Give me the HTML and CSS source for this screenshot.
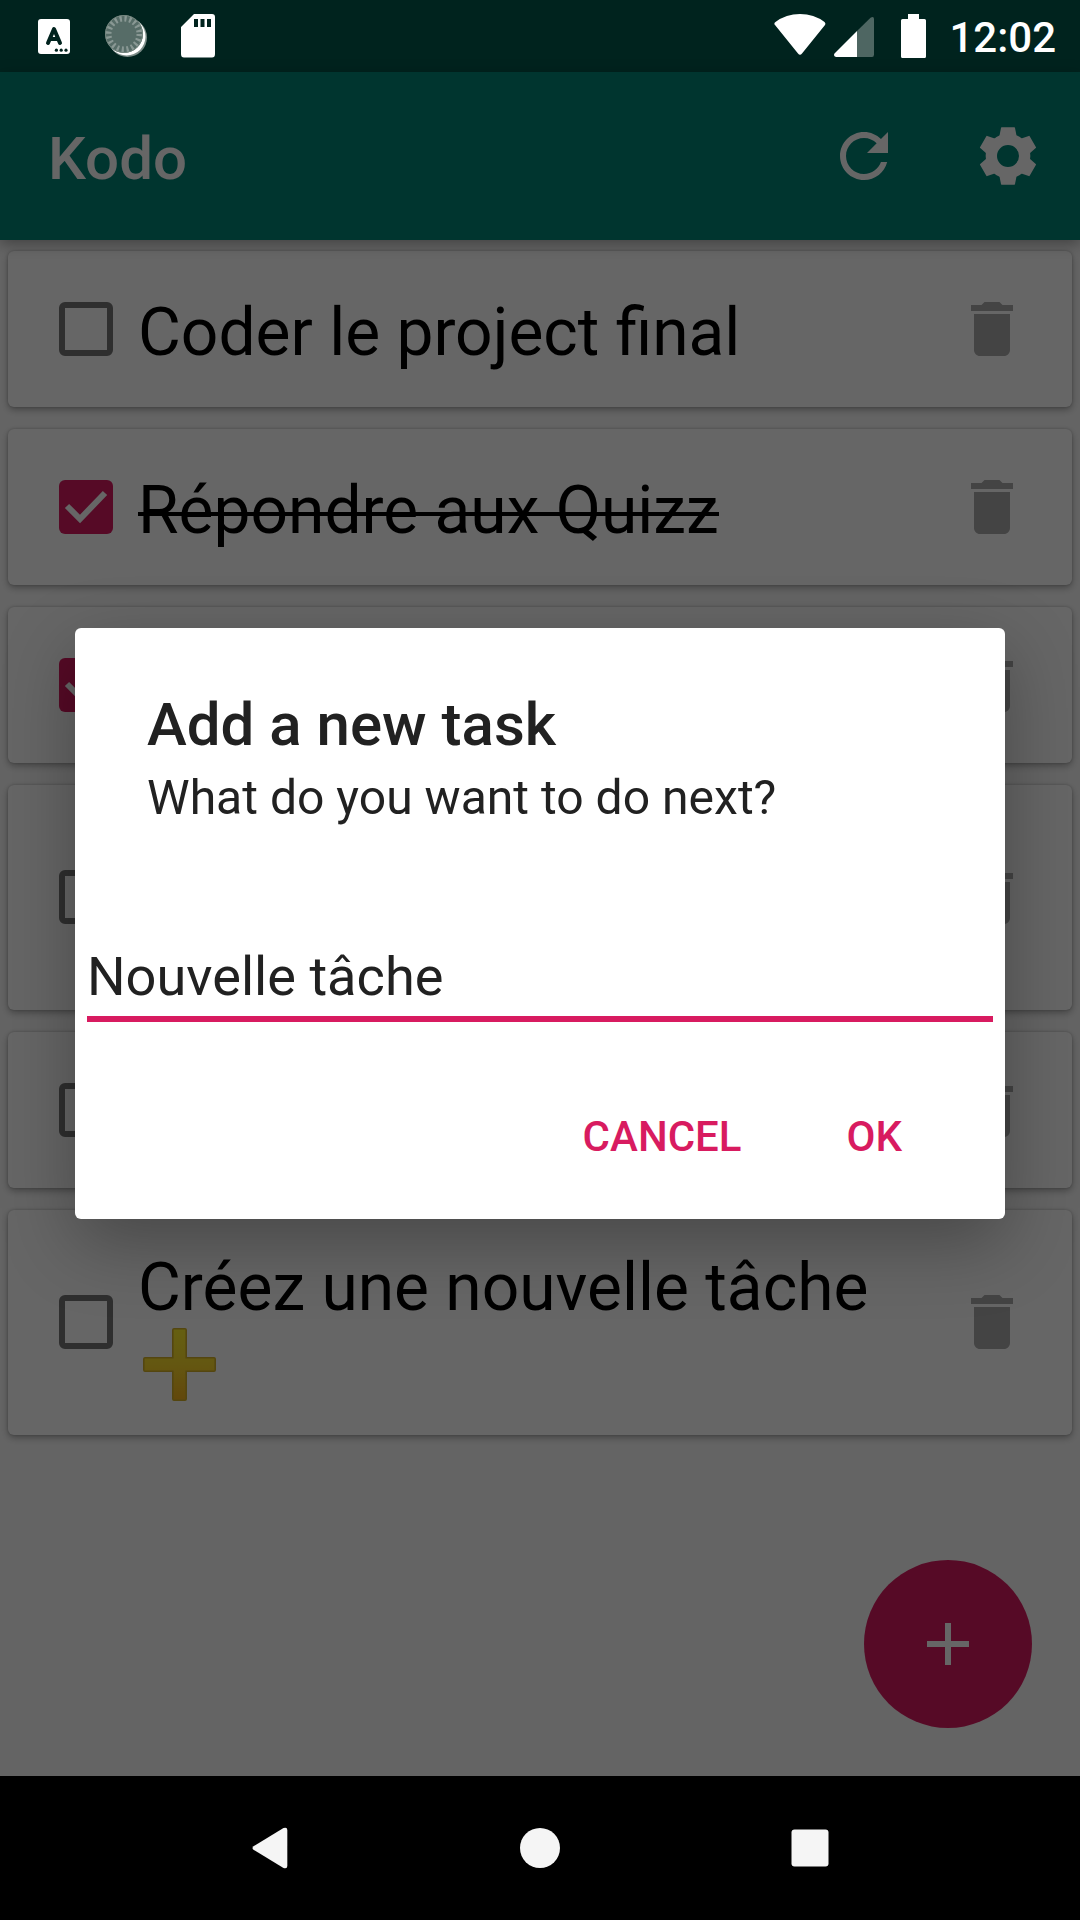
FILE: index.html
```
<!DOCTYPE html>
<html lang="fr">
<head>
<meta charset="utf-8">
<title>Kodo</title>
<link rel="stylesheet" href="styles.css">
</head>
<body>
<svg class="defs" aria-hidden="true">
  <symbol id="trash" viewBox="0 0 24 24"><path d="M6 19c0 1.1.9 2 2 2h8c1.1 0 2-.9 2-2V7H6v12zM19 4h-3.5l-1-1h-5l-1 1H5v2h14V4z"/></symbol>
  <symbol id="check" viewBox="0 0 54 54"><path d="M8 26 L21 39 L46 13" fill="none" stroke="#fff" stroke-width="6"/></symbol>
</svg>
<div class="phone">
  <header class="status">
    <div class="status-left">
      <svg width="32" height="35" viewBox="0 0 32 35"><rect width="32" height="35" rx="3" fill="#fff"/><path d="M10 24 L16 10 L22 24 M12 20 H20" fill="none" stroke="#00231e" stroke-width="4" stroke-linecap="round" stroke-linejoin="round"/><g fill="#00231e"><circle cx="18.4" cy="31.2" r="1.6"/><circle cx="23.2" cy="31.2" r="1.6"/><circle cx="28" cy="31.2" r="1.6"/></g></svg>
      <svg class="sync" width="44" height="44" viewBox="0 0 44 44"><circle cx="23.500" cy="23.500" r="19.500" fill="#7c8c88"/><circle cx="22.500" cy="22.500" r="19" fill="#fff"/><circle cx="20" cy="20" r="19" fill="#566c67"/><circle cx="20" cy="20" r="15.500" fill="none" stroke="#899894" stroke-width="6" stroke-dasharray="2.200 2.670"/><circle cx="20" cy="20" r="18.500" fill="none" stroke="#74867f" stroke-width="1"/></svg>
      <svg width="34" height="44" viewBox="0 0 34 44"><path fill="#fff" fill-rule="evenodd" d="M13 0H31Q34 0 34 3V40Q34 43.500 31 43.500H3Q0 43.500 0 40V13ZM13 5V13H17V5ZM19.500 5V13H23.500V5ZM26 5V13H30V5Z"/></svg>
    </div>
    <div class="status-right">
      <svg width="52" height="42" viewBox="0 0 52 42"><path fill="#fff" d="M1 11Q-.5 9.500 1.500 8Q12 0 26 0Q40 0 50.500 8Q52 9.500 51 11L28 39.500Q26 42 24 39.500Z"/></svg>
      <svg class="signal" width="40" height="40" viewBox="0 0 40 40"><path fill="#4e6662" d="M23 14 36.500.7Q40-1 40 2V37.500Q40 40 38 40H23Z"/><path fill="#fff" d="M23 14V40H2Q-1 39 .5 36.500Z"/></svg>
      <svg class="battery" width="25" height="44" viewBox="0 0 25 44"><path fill="#fff" d="M7 0H18V5H23.500Q25 5 25 6.500V42.500Q25 44 23.500 44H1.500Q0 44 0 42.500V6.500Q0 5 1.500 5H7Z"/></svg>
      <span class="clock">12:02</span>
    </div>
  </header>

  <div class="app">
    <div class="appbar">
      <h1 class="app-title">Kodo</h1>
      <div class="actions">
        <svg class="action" viewBox="0 0 24 24"><path d="M17.650 6.350C16.200 4.900 14.210 4 12 4c-4.420 0-7.990 3.580-7.990 8s3.570 8 7.990 8c3.730 0 6.840-2.550 7.730-6h-2.080c-.82 2.330-3.040 4-5.650 4-3.310 0-6-2.690-6-6s2.690-6 6-6c1.660 0 3.140.69 4.220 1.780L13 11h7V4l-2.350 2.350z"/></svg>
        <svg class="action" viewBox="-108 -108 216 216">
          <defs><path id="tooth" d="M-27-54 L-21-84Q-21-86-19-86H19Q21-86 21-84L27-54Z"/></defs>
          <circle r="50" fill="none" stroke="#fff" stroke-width="34"/>
          <use href="#tooth"/><use href="#tooth" transform="rotate(60)"/><use href="#tooth" transform="rotate(120)"/><use href="#tooth" transform="rotate(180)"/><use href="#tooth" transform="rotate(240)"/><use href="#tooth" transform="rotate(300)"/>
        </svg>
      </div>
    </div>

    <main class="list">
      <article class="card"><span class="box"></span><p class="task">Coder le project final</p><svg class="trash"><use href="#trash"/></svg></article>
      <article class="card"><span class="box checked"><svg><use href="#check"/></svg></span><p class="task"><s class="done">Répondre aux Quizz</s></p><svg class="trash"><use href="#trash"/></svg></article>
      <article class="card"><span class="box checked"><svg><use href="#check"/></svg></span><p class="task"></p><svg class="trash"><use href="#trash"/></svg></article>
      <article class="card tall"><span class="box"></span><p class="task"></p><svg class="trash"><use href="#trash"/></svg></article>
      <article class="card"><span class="box"></span><p class="task"></p><svg class="trash"><use href="#trash"/></svg></article>
      <article class="card tall"><span class="box"></span><p class="task">Créez une nouvelle tâche
        <svg class="plus" viewBox="0 0 73 73"><defs><linearGradient id="gold" x1="0" y1="0" x2="0" y2="1"><stop offset="0" stop-color="#fdee2c"/><stop offset=".5" stop-color="#fad92b"/><stop offset="1" stop-color="#f5b21d"/></linearGradient></defs><path d="M31 .8H42Q43.200.8 43.200 2V29.800H71Q72.200 29.800 72.200 31V42Q72.200 43.200 71 43.200H43.200V71Q43.200 72.200 42 72.200H31Q29.800 72.200 29.800 71V43.200H2Q.8 43.200.8 42V31Q.8 29.800 2 29.800H29.800V2Q29.800.8 31 .8Z" fill="url(#gold)" stroke="#d2b028" stroke-width="1.600"/></svg></p><svg class="trash"><use href="#trash"/></svg></article>
    </main>

    <div class="fab"><svg width="42" height="42" viewBox="0 0 42 42"><path fill="#fff" d="M18 0H24V18H42V24H24V42H18V24H0V18H18Z"/></svg></div>

    <div class="scrim">
      <section class="dialog">
        <h2 class="dialog-title">Add a new task</h2>
        <p class="dialog-message">What do you want to do next?</p>
        <div class="field">Nouvelle tâche</div>
        <div class="buttons"><span>CANCEL</span><span>OK</span></div>
      </section>
    </div>
  </div>

  <nav class="nav">
    <svg width="36" height="42" viewBox="0 0 36 42"><path fill="#f5f5f5" d="M1.500 19.200 31.500 1Q35.300-.3 35.300 3V39Q35.300 42.300 31.500 41L1.500 22.800Q-.5 21 1.500 19.200Z"/></svg>
    <svg width="40" height="40" viewBox="0 0 40 40"><circle cx="20" cy="20" r="20" fill="#f5f5f5"/></svg>
    <svg width="38" height="38" viewBox="0 0 38 38"><rect x=".5" y=".5" width="37" height="37" rx="3" fill="#f5f5f5"/></svg>
  </nav>
</div>
</body>
</html>
```

FILE: styles.css
```
* { box-sizing: border-box; margin: 0; padding: 0; }
body { font-family: Roboto, sans-serif; background: #000; }
svg { display: block; flex: none; }
.defs { position: absolute; width: 0; height: 0; }

.phone { width: 1080px; height: 1920px; display: grid; grid-template-rows: 72px 1704px 144px; overflow: hidden; }

.status { background: #00231e; display: flex; justify-content: space-between; padding: 0 24px 0 38px; color: #fff; }
.status-left, .status-right { display: flex; align-items: center; }
.status-left { gap: 35px; }
.status-left .sync { margin: -1px 1px 0 -1px; }
.status-left svg:last-child { margin-left: -3px; }
.status-right svg { margin-top: -3px; }
.status-right .signal { margin: 2px 0 0 8px; }
.status-right .battery { margin: 0 23px 0 27px; }
.clock { font-size: 42px; font-weight: 500; line-height: 72px; padding-top: 3px; }

.app { position: relative; background: #fafafa; }
.appbar { position: relative; z-index: 1; height: 168px; background: #008577; display: flex; align-items: center; justify-content: space-between; padding: 0 36px 0 48px; box-shadow: 0 4px 14px rgba(0, 0, 0, .35); }
.app-title { color: #fff; font-size: 60px; font-weight: 500; line-height: 70px; padding-top: 5px; }
.actions { display: flex; gap: 72px; }
.action { width: 72px; height: 72px; fill: #fff; }

.list { display: flex; flex-direction: column; gap: 22px; padding: 11px 8px; }
.card { height: 156px; background: #fff; border-radius: 6px; display: flex; align-items: center; padding: 0 44px 0 51px; box-shadow: 0 3px 7px rgba(0, 0, 0, .3), 0 0 3px rgba(0, 0, 0, .2); }
.card.tall { height: 225px; padding-bottom: 1px; }
.box { flex: none; width: 54px; height: 54px; border: 6px solid #757575; border-radius: 6px; }
.box.checked { border: 0; background: #d81b60; }
.box svg { width: 54px; height: 54px; }
.task { flex: 1; margin-left: 25px; padding-top: 7px; font-size: 65.88px; line-height: 77px; color: #000; }
.done { text-decoration: none; background: linear-gradient(#000, #000) 0 40px / 100% 4px no-repeat; }
.plus { width: 73px; height: 73px; margin: 2px 0 2px 5px; }
.trash { width: 72px; height: 72px; fill: #aaa; }

.fab { position: absolute; right: 48px; bottom: 48px; width: 168px; height: 168px; border-radius: 50%; background: #d81b60; display: flex; align-items: center; justify-content: center; }

.scrim { position: absolute; inset: 0; z-index: 2; background: rgba(0, 0, 0, .6); display: flex; align-items: center; justify-content: center; padding-bottom: 1px; }
.dialog { width: 930px; height: 591px; background: #fff; border-radius: 6px; color: #212121; padding: 62px 12px 0; box-shadow: 0 24px 72px rgba(0, 0, 0, .3); }
.dialog-title { font-size: 60px; font-weight: 500; line-height: 70px; margin-left: 60px; }
.dialog-message { font-size: 48.07px; line-height: 56px; margin: 10px 0 0 60px; }
.field { font-size: 54.15px; line-height: 64px; margin-top: 119px; height: 77px; border-bottom: 6px solid #d81b60; }
.buttons { display: flex; justify-content: flex-end; gap: 105px; padding-right: 91px; margin-top: 90px; font-size: 42px; font-weight: 500; line-height: 50px; color: #d81b60; }

.nav { background: #000; display: flex; align-items: center; justify-content: space-between; padding: 0 251px 0 252px; }
```
